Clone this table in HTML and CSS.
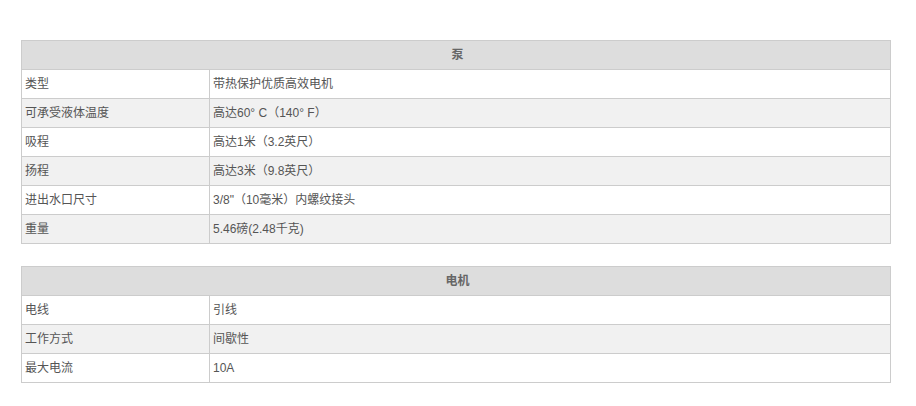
FILE: index.html
```html
<!DOCTYPE html>
<html lang="zh">
<head>
<meta charset="utf-8">
<link rel="stylesheet" href="styles.css">
</head>
<body>
<div class="page">
<table class="spec">
  <colgroup><col class="kcol"><col></colgroup>
  <thead><tr><th colspan="2">泵</th></tr></thead>
  <tbody>
    <tr><td>类型</td><td>带热保护优质高效电机</td></tr>
    <tr><td>可承受液体温度</td><td>高达60° C（140° F）</td></tr>
    <tr><td>吸程</td><td>高达1米（3.2英尺）</td></tr>
    <tr><td>扬程</td><td>高达3米（9.8英尺）</td></tr>
    <tr><td>进出水口尺寸</td><td>3/8"（10毫米）内螺纹接头</td></tr>
    <tr><td>重量</td><td>5.46磅(2.48千克)</td></tr>
  </tbody>
</table>
<table class="spec">
  <colgroup><col class="kcol"><col></colgroup>
  <thead><tr><th colspan="2">电机</th></tr></thead>
  <tbody>
    <tr><td>电线</td><td>引线</td></tr>
    <tr><td>工作方式</td><td>间歇性</td></tr>
    <tr><td>最大电流</td><td>10A</td></tr>
  </tbody>
</table>
</div>
</body>
</html>
```
FILE: styles.css
```css
html, body { margin: 0; padding: 0; background: #fff; }
body {
  font-family: "Liberation Sans", "Noto Sans CJK SC", sans-serif;
  font-size: 12px;
  color: #555;
}
.page {
  padding: 40px 25px 0 21px;
  display: flex;
  flex-direction: column;
  gap: 22px;
}
.spec {
  width: 870px;
  border-collapse: collapse;
  table-layout: fixed;
}
.spec .kcol { width: 188px; }
.spec th, .spec td {
  border: 1px solid #ccc;
  height: 28px;
  padding: 0 0 0 3px;
  text-align: left;
  vertical-align: middle;
  line-height: 16px;
}
.spec th {
  background: #dddddd;
  text-align: center;
  font-weight: bold;
  color: #666;
}
.spec tbody tr:nth-child(odd) td { background: #fff; }
.spec tbody tr:nth-child(even) td { background: #f1f1f1; }
```
